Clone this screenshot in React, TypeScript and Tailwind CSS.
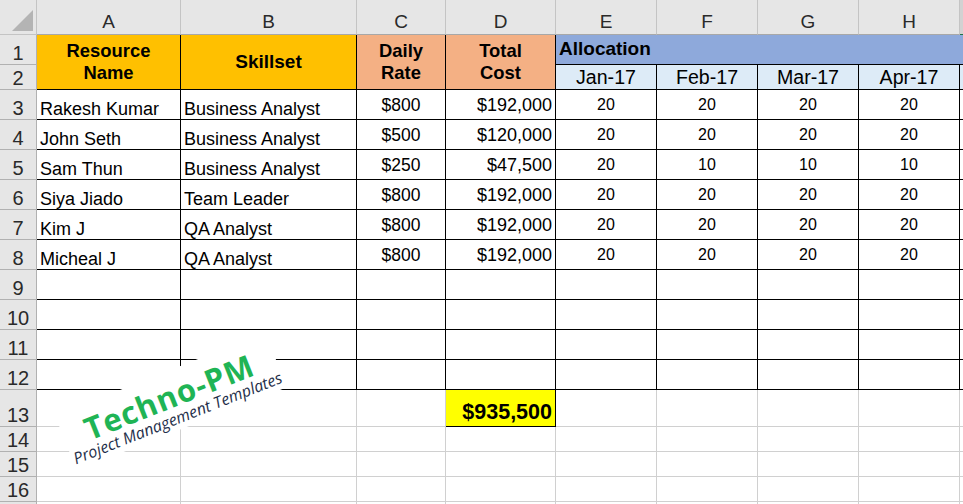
const sans = "font-['Liberation_Sans',Arial,sans-serif]";

const colHeaders = ['A', 'B', 'C', 'D', 'E', 'F', 'G', 'H'];

const people = [
  ['Rakesh Kumar', 'Business Analyst', '$800', '$192,000', '20', '20', '20', '20'],
  ['John Seth', 'Business Analyst', '$500', '$120,000', '20', '20', '20', '20'],
  ['Sam Thun', 'Business Analyst', '$250', '$47,500', '20', '10', '10', '10'],
  ['Siya Jiado', 'Team Leader', '$800', '$192,000', '20', '20', '20', '20'],
  ['Kim J', 'QA Analyst', '$800', '$192,000', '20', '20', '20', '20'],
  ['Micheal J', 'QA Analyst', '$800', '$192,000', '20', '20', '20', '20'],
];

const months = ['Jan-17', 'Feb-17', 'Mar-17', 'Apr-17'];

function RowNum({ n }: { n?: number }) {
  return (
    <div className="flex items-end justify-center overflow-hidden border-r border-b border-[#b1b1b1] bg-[#e6e6e6] text-[20px] leading-[22px] text-[#2a2a2a]">
      {n}
    </div>
  );
}

function Blank({ dark }: { dark?: boolean }) {
  return <div className={dark ? 'border-r border-b border-black' : 'border-r border-b border-[#d0d0d0]'} />;
}

export default function App() {
  return (
    <div className={`relative h-[504px] w-[963px] overflow-hidden bg-white ${sans}`}>
      <div className="grid grid-cols-[37px_144px_176px_89px_110px_101px_101px_101px_101px_20px] grid-rows-[35px_30px_25px_30px_30px_30px_30px_30px_30px_30px_30px_30px_30px_37px_25px_25px_25px_3px]">
        {/* column headers */}
        <div className="relative border-r border-b border-[#c4c4c4] bg-[#e6e6e6]">
          <svg className="absolute left-[12px] top-[10px]" width="22" height="22" viewBox="0 0 22 22">
            <polygon points="21,0 21,21 0,21" fill="#b4b4b4" />
          </svg>
        </div>
        {colHeaders.map(c => (
          <div key={c} className="flex items-end justify-center border-r border-b border-r-[#c4c4c4] border-b-[#a8a8a8] bg-[#e6e6e6] pb-[1px] text-[19px] leading-[22px] text-[#2a2a2a]">
            {c}
          </div>
        ))}
        <div className="border-b border-[#217346] bg-[#d2d2d2]" />

        {/* rows 1 and 2 */}
        <RowNum n={1} />
        <div className="row-span-2 flex items-center justify-center border-r border-b border-black bg-[#ffc000] text-center text-[18.4px] font-bold leading-[22px] text-black">
          Resource<br />Name
        </div>
        <div className="row-span-2 flex items-center justify-center border-r border-b border-black bg-[#ffc000] text-[19px] font-bold text-black">
          Skillset
        </div>
        <div className="row-span-2 flex items-center justify-center border-r border-b border-black bg-[#f4b084] text-center text-[18.4px] font-bold leading-[22px] text-black">
          Daily<br />Rate
        </div>
        <div className="row-span-2 flex items-center justify-center border-r border-b border-black bg-[#f4b084] text-center text-[18.4px] font-bold leading-[22px] text-black">
          Total<br />Cost
        </div>
        <div className="col-span-5 flex items-center border-b border-black bg-[#8ea9db] pl-[3px] text-[19px] font-bold text-black">
          Allocation
        </div>
        <RowNum n={2} />
        {months.map(m => (
          <div key={m} className="flex items-center justify-center border-r border-b border-black bg-[#ddebf7] pt-[1px] text-[19.6px] text-black">
            {m}
          </div>
        ))}
        <div className="border-b border-black bg-[#ddebf7]" />

        {/* data rows */}
        {people.map((row, i) => (
          <div key={row[0]} className="contents">
            <RowNum n={i + 3} />
            <div className="flex items-end border-r border-b border-black pb-[1px] pl-[3px] text-[18px] leading-[18px] text-black">{row[0]}</div>
            <div className="flex items-end border-r border-b border-black pb-[1px] pl-[3px] text-[18px] leading-[18px] text-black">{row[1]}</div>
            <div className="flex items-center justify-center border-r border-b border-black pt-[1px] text-[17.5px] text-black">{row[2]}</div>
            <div className="flex items-center justify-end border-r border-b border-black pt-[1px] pr-[3px] text-[18px] text-black">{row[3]}</div>
            {row.slice(4).map((v, j) => (
              <div key={j} className="flex items-center justify-center border-r border-b border-black pt-[1px] text-[16px] text-black">{v}</div>
            ))}
            <div className="border-b border-black" />
          </div>
        ))}

        {/* empty bordered rows */}
        {[9, 10, 11, 12].map(n => (
          <div key={n} className="contents">
            <RowNum n={n} />
            {colHeaders.map(c => <Blank key={c} dark />)}
            <div className="border-b border-black" />
          </div>
        ))}

        {/* row 13 */}
        <RowNum n={13} />
        <Blank />
        <Blank />
        <Blank />
        <div className="flex items-end justify-end border-r border-b border-black bg-[#ffff00] pr-[3px] text-[21.5px] font-bold leading-[27px] text-black">
          $935,500
        </div>
        <Blank />
        <Blank />
        <Blank />
        <Blank />
        <div className="border-b border-[#d0d0d0]" />

        {[14, 15, 16].map(n => (
          <div key={n} className="contents">
            <RowNum n={n} />
            {colHeaders.map(c => <Blank key={c} />)}
            <div className="border-b border-[#d0d0d0]" />
          </div>
        ))}

        {/* row 17 is cut off by the window, only its top shows */}
        <RowNum />
        {colHeaders.map(c => <Blank key={c} />)}
        <div />
      </div>

      {/* watermark logo sits over the grid */}
      <div className="absolute left-[58px] top-[372px] flex h-[59px] w-[226px] origin-center -rotate-[21.6deg] flex-col items-center justify-end bg-white pb-[2px] font-['Open_Sans',sans-serif]">
        <div className="text-[31px] font-bold leading-[28px] tracking-[1px] text-[#1fb455]">Techno-PM</div>
        <div className="whitespace-nowrap text-[16px] italic leading-[19px] text-[#1f2f4a]">Project Management Templates</div>
      </div>
    </div>
  );
}
